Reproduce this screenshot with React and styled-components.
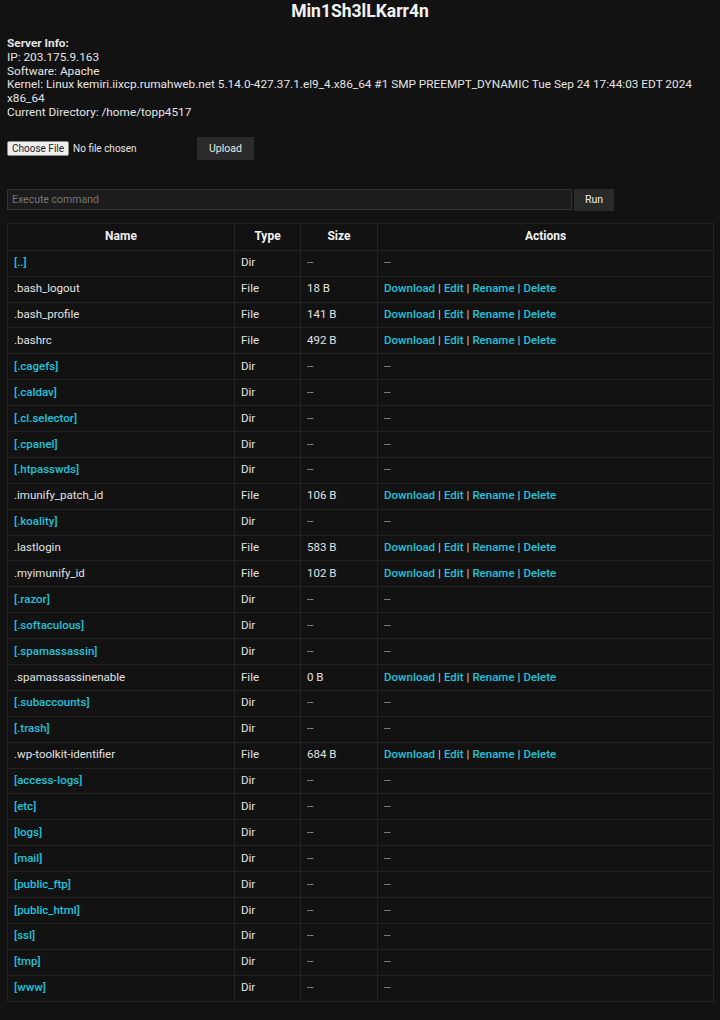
import React from "react";
import styled, { createGlobalStyle } from "styled-components";

const Global = createGlobalStyle`
  html, body { margin: 0; padding: 0; background: #121212; }
  body { font-family: Roboto, "Noto Sans", Arial, sans-serif; color: #e8e8e8; }
`;

const Page = styled.div`
  padding: 0 7px 20px 7px;
  font-size: 11.8px;
  line-height: 13.8px;
`;

const Title = styled.h1`
  margin: 0;
  padding-top: 2px;
  text-align: center;
  font-size: 17.5px;
  line-height: 18px;
  font-weight: 700;
  color: #f2f2f2;
`;

const Info = styled.div`
  margin-top: 17px;
  color: #e4e4e4;
`;

const Strong = styled.div`
  font-weight: 700;
`;

const UploadRow = styled.form`
  display: flex;
  align-items: center;
  margin-top: 17px;
  height: 24px;
`;

const FileInput = styled.input`
  width: 190px;
  font-family: Roboto, Arial, sans-serif;
  font-size: 10px;
  color: #e6e6e6;
  &::file-selector-button {
    font-family: Roboto, Arial, sans-serif;
    font-size: 10px;
    background: #efefef;
    color: #222;
    border: 1px solid #8a8a8a;
    border-radius: 2px;
    padding: 1px 4px;
    margin-right: 4px;
  }
`;

const Button = styled.button`
  background: #2a2a2a;
  color: #e8e8e8;
  border: none;
  font-family: Roboto, Arial, sans-serif;
  font-size: 10.5px;
  height: ${(p) => p.$h || 23}px;
  padding: 0 ${(p) => p.$px || 12}px;
  margin-left: ${(p) => p.$ml || 0}px;
  cursor: pointer;
`;

const CmdRow = styled.form`
  display: flex;
  align-items: center;
  margin-top: 28px;
`;

const CmdInput = styled.input`
  width: 565px;
  box-sizing: border-box;
  height: 21px;
  background: #1c1c1c;
  border: 1px solid #333;
  color: #ddd;
  font-family: Roboto, Arial, sans-serif;
  font-size: 10.5px;
  padding: 0 4px;
  &::placeholder { color: #777; }
`;

const Table = styled.table`
  margin-top: 12px;
  width: 706px;
  border-collapse: collapse;
  table-layout: fixed;
  font-size: 11.5px;
`;

const Th = styled.th`
  border: 1px solid #232323;
  height: 26px;
  padding: 0 6px;
  font-weight: 700;
  text-align: center;
  color: #f0f0f0;
  font-size: 12px;
`;

const Td = styled.td`
  border: 1px solid #232323;
  height: 24.9px;
  padding: 0 6px;
  color: #e2e2e2;
  white-space: nowrap;
`;

const Link = styled.a`
  color: #1fc3dc;
  text-decoration: none;
  font-weight: 500;
`;

const Sep = styled.span`
  color: #cfcfcf;
  margin: 0 3px;
`;

const Dash = styled.span`
  color: #9a9a9a;
`;

const rows = [
  ["..", "d"],
  [".bash_logout", "f", "18 B"],
  [".bash_profile", "f", "141 B"],
  [".bashrc", "f", "492 B"],
  [".cagefs", "d"],
  [".caldav", "d"],
  [".cl.selector", "d"],
  [".cpanel", "d"],
  [".htpasswds", "d"],
  [".imunify_patch_id", "f", "106 B"],
  [".koality", "d"],
  [".lastlogin", "f", "583 B"],
  [".myimunify_id", "f", "102 B"],
  [".razor", "d"],
  [".softaculous", "d"],
  [".spamassassin", "d"],
  [".spamassassinenable", "f", "0 B"],
  [".subaccounts", "d"],
  [".trash", "d"],
  [".wp-toolkit-identifier", "f", "684 B"],
  ["access-logs", "d"],
  ["etc", "d"],
  ["logs", "d"],
  ["mail", "d"],
  ["public_ftp", "d"],
  ["public_html", "d"],
  ["ssl", "d"],
  ["tmp", "d"],
  ["www", "d"],
];

export default function App() {
  return (
    <Page>
      <Global />
      <Title>Min1Sh3lLKarr4n</Title>
      <Info>
        <Strong>Server Info:</Strong>
        <div>IP: 203.175.9.163</div>
        <div>Software: Apache</div>
        <div>
          Kernel: Linux kemiri.iixcp.rumahweb.net 5.14.0-427.37.1.el9_4.x86_64 #1 SMP PREEMPT_DYNAMIC Tue Sep 24 17:44:03 EDT 2024 x86_64
        </div>
        <div>Current Directory: /home/topp4517</div>
      </Info>
      <UploadRow onSubmit={(e) => e.preventDefault()}>
        <FileInput type="file" />
        <Button type="submit" $h={23} $px={12}>Upload</Button>
      </UploadRow>
      <CmdRow onSubmit={(e) => e.preventDefault()}>
        <CmdInput placeholder="Execute command" />
        <Button type="submit" $h={22} $px={11} $ml={2}>Run</Button>
      </CmdRow>
      <Table>
        <colgroup>
          <col style={{ width: 227 }} />
          <col style={{ width: 66 }} />
          <col style={{ width: 77 }} />
          <col style={{ width: 336 }} />
        </colgroup>
        <thead>
          <tr>
            <Th>Name</Th>
            <Th>Type</Th>
            <Th>Size</Th>
            <Th>Actions</Th>
          </tr>
        </thead>
        <tbody>
          {rows.map(([name, kind, size]) => (
            <tr key={name}>
              <Td>{kind === "d" ? <Link href="#">[{name}]</Link> : name}</Td>
              <Td>{kind === "d" ? "Dir" : "File"}</Td>
              <Td>{kind === "d" ? <Dash>--</Dash> : size}</Td>
              <Td>
                {kind === "d" ? (
                  <Dash>--</Dash>
                ) : (
                  <>
                    <Link href="#">Download</Link>
                    <Sep>|</Sep>
                    <Link href="#">Edit</Link>
                    <Sep>|</Sep>
                    <Link href="#">Rename</Link>
                    <Sep>|</Sep>
                    <Link href="#">Delete</Link>
                  </>
                )}
              </Td>
            </tr>
          ))}
        </tbody>
      </Table>
    </Page>
  );
}
